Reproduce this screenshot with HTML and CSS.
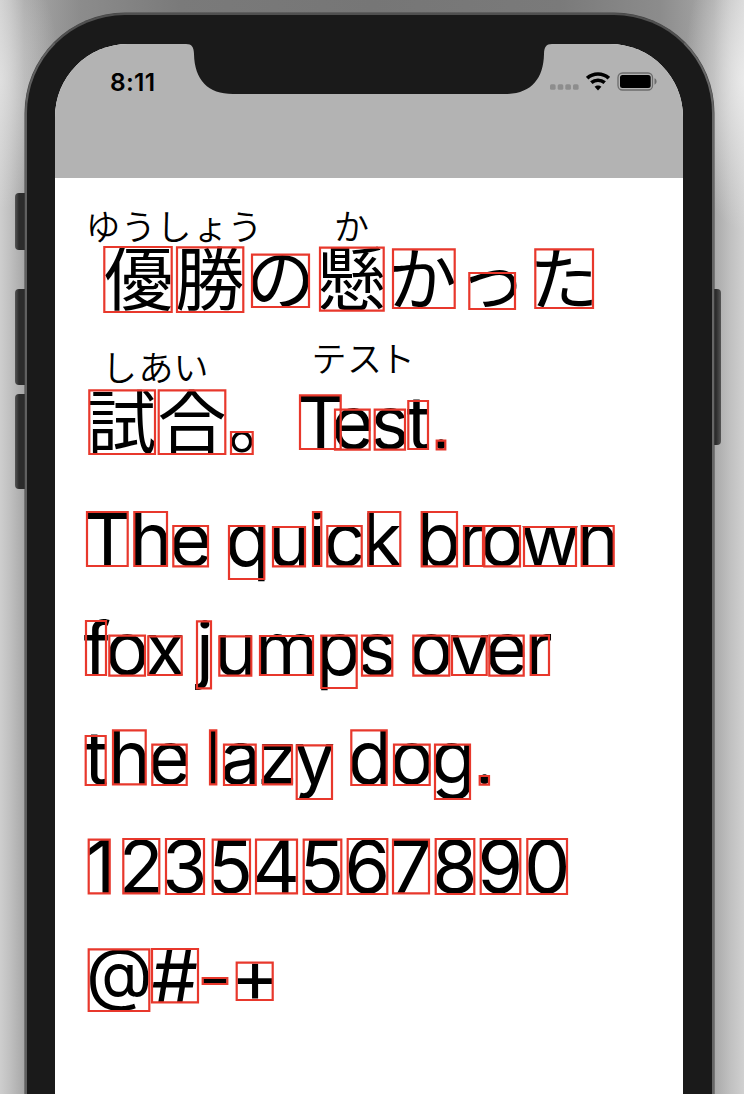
FILE: index.html
```
<!DOCTYPE html>
<html lang="ja">
<head>
<meta charset="utf-8">
<title>Glyph bounds</title>
<link rel="stylesheet" href="styles.css">
</head>
<body>
<div class="stage">
  <i class="key mute"></i><i class="key up"></i><i class="key down"></i><i class="key power"></i>
  <div class="phone">
    <div class="screen">
      <header class="status">
        <svg class="notch" width="366" height="51" viewBox="186 43 366 51"><path d="M186 43V44C192 44 193.700 47 194 54C194.500 80 208 94 233 94H505C531 94 543.500 79 544 54C544.300 47 546 44 552 44V43Z"/></svg>
        <span class="time">8:11</span>
        <div class="icons">
          <svg class="dots" width="29" height="6" viewBox="0 0 29 6"><rect width="5.600" height="5.400" y=".3" rx="1.500"/><rect x="7.700" y=".3" width="5.600" height="5.400" rx="1.500"/><rect x="15.300" y=".3" width="5.600" height="5.400" rx="1.500"/><rect x="23" y=".3" width="5.600" height="5.400" rx="1.500"/></svg>
          <svg class="wifi" width="24" height="19" viewBox="0 0 24 19"><path d="M1.200 6.200C7.300.6 16.700.6 22.800 6.200M5.300 10.700C9.200 7.400 14.800 7.400 18.700 10.700"/><path class="solid" d="M12 18.500L8.600 14.800C10.500 12.900 13.500 12.900 15.400 14.800Z"/></svg>
          <svg class="battery" width="41" height="20" viewBox="0 0 41 20"><rect class="case" x="1" y="1" width="34.500" height="17" rx="4.500"/><rect x="3" y="3" width="30.700" height="13" rx="2.500"/><path class="tip" d="M37.500 6.300C40.300 7.500 40.300 11.500 37.500 12.700Z"/></svg>
        </div>
      </header>
      <main class="lines">
        <svg class="line" height="152" viewBox="55 178 628 152">
          <text class="ruby" y="239.500" x="85.500 121 156.500 193 227.500">ゆうしょう</text>
          <text class="ruby" y="239.500" x="334">か</text>
          <text class="jp" y="305.300" x="104.100 175.300 246.100 317 388 457.700 529.200">優勝の懸かった</text>
          <path class="box" d="M104.300 247h67.400v65h-67.400zM177 247.300h66.300v64.700h-66.300zM252 254.700h57v52.300h-57zM320 247.700h63.700v63h-63.700zM393 249.300h61.700v58.700h-61.700zM469.300 273h45.700v36h-45.700zM535.300 249.300h57.700v58.700h-57.700z"/>
        </svg>
        <svg class="line" height="160" viewBox="55 330 628 160">
          <text class="ruby" y="381" x="102 138.500 173.500">しあい</text>
          <text class="ruby" y="371.500" x="311.500 347 380">テスト</text>
          <text class="jp" y="447.900" x="87.300 157.600 228.500">試合。</text>
          <text class="en" y="448.800" x="296.900 330.900 370.400 406.600 430.500">Test.</text>
          <path class="box" d="M89.300 390.300h65.700v63.700h-65.700zM158.700 390.300h66.600v63.700h-66.600zM231 432h21.700v22h-21.700zM300 395.300h40.700v53.700h-40.700zM335 409.700h34.700v40h-34.700zM374.700 409.700h30.300v40h-30.300zM408.300 401h19.700v48h-19.700zM436.700 440.700h8.600v8.600h-8.600z"/>
        </svg>
        <svg class="line" height="109" viewBox="55 490 628 109">
          <text class="en" y="565.600"><tspan x="83.800 129.200 169.200">The</tspan> <tspan x="225.200 267.500 308.100 323.500 361.800">quick</tspan> <tspan x="415.900 457.500 480.100 520 576.200">brown</tspan></text>
          <path class="box" d="M87 512h40.700v54h-40.700zM134.300 512h32.700v54h-32.700zM173.300 526h34.700v40.300h-34.700zM229 526h35.300v53h-35.300zM273 527h32v39.300h-32zM313 512h8.300v54h-8.300zM327.300 526h34.400v40.300h-34.400zM368.300 512h32v54h-32zM421.700 512h35.300v54.300h-35.300zM464 526h19v40h-19zM484.300 526h35.700v40.300h-35.700zM524 527h52v39h-52zM581.700 526h32v40h-32z"/>
        </svg>
        <svg class="line" height="109" viewBox="55 599 628 109">
          <text class="en" y="674.700"><tspan x="83.500 105.200 145">fox</tspan> <tspan x="196 213.800 254.500 315.500 357.600">jumps</tspan> <tspan x="409.300 448.900 485 524.900">over</tspan></text>
          <path class="box" d="M86 621h20v54h-20zM109.300 635.700h35.700v40h-35.700zM148.300 636.300h33.400v38.700h-33.400zM197 621.300h14v67h-14zM219.300 636.300h32v39.400h-32zM260 636h53v39h-53zM321.300 635.700h35.400v52.300h-35.400zM362 635.700h30.300v40h-30.300zM413.300 635.700h36v40h-36zM452 636.300h34.700v38.700h-34.700zM489.300 635.700h34.400v40h-34.400zM530.700 635.700h18.300v39.300h-18.300z"/>
        </svg>
        <svg class="line" height="109" viewBox="55 708 628 109">
          <text class="en" y="784"><tspan x="84.200 107.800 148">the</tspan> <tspan x="204.200 220.300 257 293.900">lazy</tspan> <tspan x="347.500 389.900 431 473.900">dog.</tspan></text>
          <path class="box" d="M85.700 736h20v49h-20zM113 730.300h32.700v54h-32.700zM152.300 744.700h34.400v40.300h-34.400zM210 730.300h6.300v54h-6.300zM224 744.700h31.700v40.300h-31.700zM263 745.300h29v39h-29zM296.700 745.300h35.300v53.700h-35.300zM351.300 730.300h35.400v54.700h-35.400zM394 744.700h35.700v40.300h-35.700zM435 744.700h35v54.300h-35zM479.700 776h9.300v8.700h-9.300z"/>
        </svg>
        <svg class="line" height="109" viewBox="55 817 628 109">
          <text class="en" y="893.200" x="85.700 118.800 162 208.300 252.500 299.500 344.500 390 432 477.500 524.100">12354567890</text>
          <path class="box" d="M88.700 839.700h21v53.600h-21zM123.300 839h36v54.300h-36zM166 839h38v55h-38zM212.700 839.700h37.300v54.300h-37.300zM256 839.700h41v53.600h-41zM303.700 839.700h37.600v54.300h-37.600zM347.700 839h39.600v55h-39.600zM393 839.700h36v53.600h-36zM435.700 839h38.600v55h-38.600zM480.700 839h39.600v55h-39.600zM527.300 839h39.700v55h-39.700z"/>
        </svg>
        <svg class="line" height="168" viewBox="55 926 628 168">
          <text class="en"><tspan class="at" x="86" y="997.500">@</tspan><tspan y="1002 1003.500 1002" x="151.500 198 230.700">#-+</tspan></text>
          <path class="box" d="M88.700 949.300h60.600v61.700h-60.600zM152 949h46v53.300h-46zM202.700 978h24.600v6h-24.600zM236.700 962.700h36v37.300h-36z"/>
        </svg>
      </main>
    </div>
  </div>
</div>
</body>
</html>
```
FILE: styles.css
```
body { margin: 0; }
.stage {
  position: relative;
  width: 744px;
  height: 1094px;
  box-sizing: border-box;
  padding: 13px 30px 0 25px;
  overflow: hidden;
  background:
    radial-gradient(ellipse 60px 130px at 0 80px, rgba(240,240,240,.5) 0, rgba(240,240,240,0) 100%),
    radial-gradient(ellipse 60px 150px at 100% 80px, rgba(245,245,245,.7) 0, rgba(240,240,240,0) 100%),
    linear-gradient(90deg, #cecece 0, #c0c0c0 10px, #a8a8a8 24px, #8c8c8c 80px, #7a7a7a 180px, #767676 50%, #7a7a7a 560px, #8c8c8c 660px, #a8a8a8 714px, #c0c0c0 730px, #d0d0d0 744px);
}
.phone {
  position: relative;
  height: 1200px;
  box-sizing: border-box;
  padding: 29px 28px 0;
  border: solid #505050;
  border-width: 2px 2px 0;
  border-right-color: #666;
  border-left-color: #606060;
  border-radius: 100px 100px 0 0;
  background: #1a1a1a;
  box-shadow: 0 0 0 .5px #444;
}
.screen {
  width: 628px;
  height: 1170px;
  border-radius: 73px 73px 0 0;
  overflow: hidden;
  background: #fff;
}
.status {
  position: relative;
  display: flex;
  justify-content: space-between;
  height: 134px;
  box-sizing: border-box;
  padding: 26px 25px 0 55px;
  background: #b3b3b3;
}
.notch { position: absolute; left: 131px; top: -1px; fill: #1a1a1a; }
.time { font: 600 24.500px/24px Inter, sans-serif; letter-spacing: .3px; color: #000; }
.icons { display: flex; align-items: flex-start; }
.dots { margin: 14px 7px 0 0; fill: #8d8d8d; }
.wifi { margin-top: 2px; fill: none; stroke: #000; stroke-width: 3.700; }
.wifi .solid { fill: #000; stroke: none; }
.battery { margin: 2px 0 0 7px; }
.battery .case { fill: none; stroke: #6c6c6c; stroke-width: 1.300; }
.battery .tip { fill: #6c6c6c; }
.key {
  position: absolute;
  width: 14px;
  border-radius: 4px;
  background: linear-gradient(90deg, #555, #2c2c2c 4px);
}
.mute { left: 15px; top: 193px; height: 57px; }
.up { left: 15px; top: 289px; height: 96px; }
.down { left: 15px; top: 394px; height: 95px; }
.power { left: 707px; top: 289px; height: 156px; background: linear-gradient(270deg, #555, #2c2c2c 5px); }
.lines { display: flex; flex-direction: column; }
.line { display: block; width: 628px; }
.ruby { font: 350 35px "Noto Sans CJK JP", sans-serif; }
.jp { font: 400 69px "Noto Sans CJK JP", sans-serif; }
.en { font: 400 73.500px Inter, sans-serif; }
.en .at { font-size: 69px; }
.box { fill: none; stroke: #e8382c; stroke-width: 2.200; }
```
